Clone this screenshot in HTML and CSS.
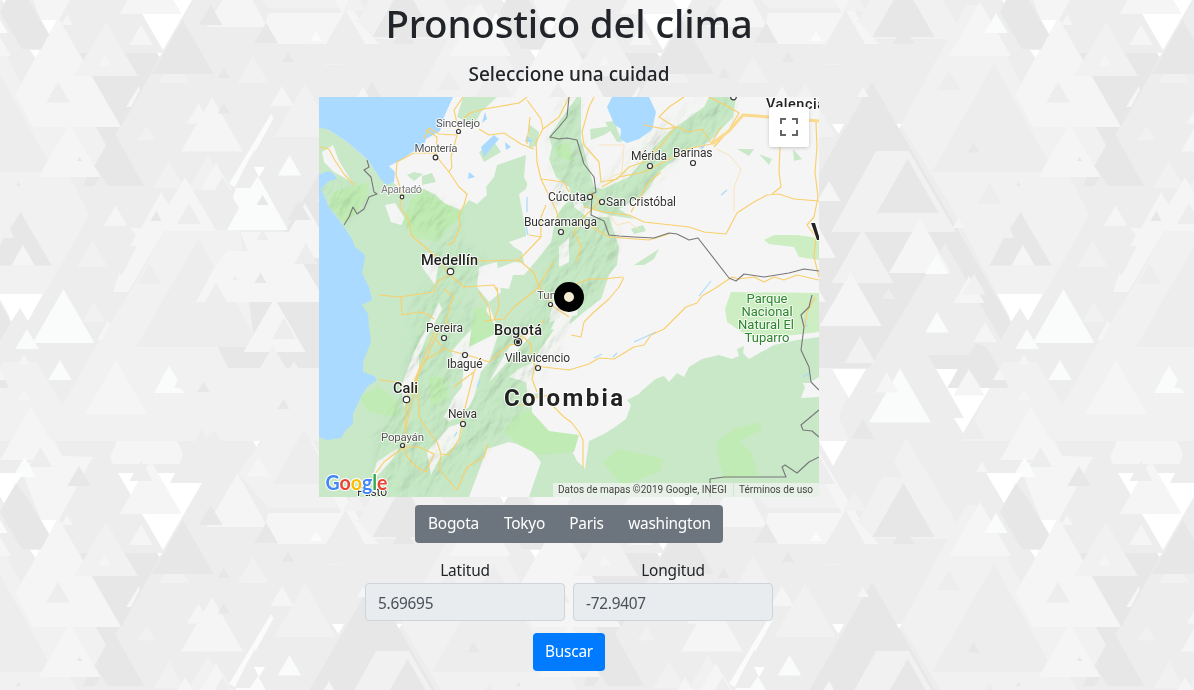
FILE: index.html
```html
<!DOCTYPE html>
<html lang="es">
<head>
<meta charset="utf-8">
<title>Pronostico del clima</title>
<link rel="stylesheet" href="styles.css">
</head>
<body>
<svg class="backdrop" width="100%" height="100%" aria-hidden="true">
  <defs>
    <g id="planes">
      <path class="b" d="M466,5L401,125 454,212 497,294H545L589,215 577,190 540,120 480,5z"/>
      <path class="d" d="M372,82L511,322 501,340 447,247 370,368H229L218,348 240,308 320,172z"/>
      <path class="a" d="M445,243L339,418H500L487,316z"/>
      <path class="b" d="M165,230H240L253,333 218,347 227,368H330L350,390 339,418 350,441H-39L-26,420 3,362H37L62,405 97,345 140,275z"/>
      <path class="a" d="M198.500,239l62.500,108h-125z"/>
      <path class="b" d="M406,438L463,533 451,539H359L356,525 382,477H402L394,461z"/>
      <path class="b" d="M257,447L262,441H312L344,508H268L238,473z"/>
      <path class="d" d="M80,53H158L160,57 121,127 85,65zM96,127H120L115,134 144,186H108L84,150zM83,186H94L100,177H87z"/>
      <path class="b" d="M35,127H96L106,145 95,165H50z"/>
      <path class="c" d="M558.500,18l62.500,109h-125z"/>
      <path class="b" d="M492,64L553,172H558L496,60z"/>
      <path class="a" d="M494,64l60,108h-122z"/>
    </g>
    <g id="facets">
      <path class="w" d="M118,473H175L170,483H202L163,550zM41,520H57L49,534.500zM30,550H40L35.500,558zM486,473H523L504,503zM157,53H162L159.500,57zM254,167H265L259,177zM-3,294H43L28,321 20,308 11,322 8,314zM253,441H260L256.500,447zM319,441H347L333,466zM332,124H344L338.500,134zM396.500,124H402L399,128.500zM332,369H366L349,398zM436,369H458L447,388zM447,388H490L463,433 454,418H464z"/>
      <path class="c" d="M117,441H177L183,453 180,464H113L110,457zM20,467L45,455 93,457 59,520H41zM42,441H54L62,456H46zM268,513H350L379,544H278L266,522z"/>
      <path class="c" d="M150.500,460l31,54h-62zM237.500,473l30,54h-61zM480,502l31,54h-62zM31,406l31,54h-62zM312,441L360,520H346L308,455z"/>
      <path class="a" d="M345.500,510l31,54h-62zM141,461l11.700,20h-23.400zM40.500,447l11.700,20h-23.400zM304,430l31,54h-62zM196,441l5,-12 5,9 9,-7 6,10z"/>
      <path class="e" d="M496,513l11.700,20h-23.400zM24.500,457l11.700,20h-23.400zM316,531l6,10h-12z"/>
      <path class="d" d="M516,483L500,512 522,549H541L549,534 526,496z"/>
      <path class="d" d="M210.700,505l11.700,20h-23.400zM266,523l11.700,20h-23.400zM79,466l11.700,20h-23.400zM403.500,483l31,54h-62zM403.500,526l11,18h-22zM182.700,520l31,54h-62z"/>
      <path class="a" d="M183.700,50l12,21h-24z"/>
      <path class="b" d="M174,56l15.500,27h-31zM253,56l15.500,27h-31zM305,83l31,54h-62zM146.500,125.500l9,15h-18zM106,22l32,54h-64zM332.700,50l9,15h-18zM169,161l15.500,27h-31zM208,155l20,35h-40zM92.500,240l15.500,27h-31zM94,302l11.700,20h-23.400z"/>
      <path class="c" d="M104.700,55l6,10.500h-12zM141,24.500l11.700,20.500h-23.400zM67,15l6,10h-12zM282,86l11.700,20h-23.400zM212,97l31,54.500h-62zM198.500,103.500l11.700,20h-23.400zM69.500,123l31,54h-62zM139,86L140,90 131,107H126zM216,163l15.500,27h-31zM363,87l6,10h-12z"/>
      <path class="a" d="M58,82l11.700,20.500h-23.400zM222.500,177l11.700,20h-23.400zM449,71l11.700,19h-23.400zM489.500,183l11.700,20.500h-23.400z"/>
      <path class="d" d="M288,52l6,10h-12zM223.700,68l6,10h-12zM223.700,103.500l6,10h-12zM473.500,142l6,10.500h-12zM79.500,157l2.500,4h-5zM18.500,182l2.500,4h-5z"/>
      <path class="e" d="M271,114L273.500,118.500 255,152V149L246,165 235,187 229,184zM289.500,155l11.700,20.500h-23.400zM258,176l30,54h-61L239,208 233,198 236,188H250z"/>
      <path class="d" d="M262.500,195l6,10h-12z"/>
      <path class="c" d="M185,177l31.500,54h-63zM161,192L175,215 165,230 128,292H113L119,273 122,275 137,246H130L136,235 130,228H141zM115.500,205.500l11.700,20.500h-23.400zM108,320L110,325 102,340H97z"/>
      <path class="a" d="M189,203l11.700,21h-23.400zM149.500,264l11.700,20h-23.400z"/>
      <path class="d" d="M156.500,210.500l5,10.500h-11z"/>
      <path class="c" d="M305,203l31,55h-62zM227,251H290L304,265 326,302H227L216,283 205,302H196L213,270zM240,232H290V251H248z"/>
      <path class="a" d="M306,243l11.700,21h-23.400zM262.500,230l6,10h-12zM235,275l2.500,5h-5z"/>
      <path class="d" d="M260.500,272.500l6,10.500h-12zM299,200l11.700,20h-23.400z"/>
      <path class="b" d="M376,151H409L456,232H331zM362.500,229l31,54h-62z"/>
      <path class="d" d="M407.700,159l31,54h-62zM20.500,212l31,53.500h-62L4,238H14L10,229z"/>
      <path class="c" d="M23,245l11.700,20.500h-23.400zM329,181l11.700,20h-23.400zM420,218l31,55h-62zM350.700,272l31,54h-62zM274.500,298l31,54h-62zM469,276l15.500,27h-31zM458.500,218l6,10h-12zM485,322l11.700,20h-23.400z"/>
      <path class="b" d="M474,274l11.700,20.500h-23.400zM273,346l13,22h-26zM294,361l4.500,7h-9zM360,336l15.500,27h-31z"/>
      <path class="a" d="M388.500,288l6.500,11h-13zM284,318l11.700,21h-23.400z"/>
      <path class="e" d="M436.700,254l11.700,20h-23.400zM437,312l11.700,20.500h-23.400zM27,329l11.700,20h-23.400zM63.500,289l31,54h-62zM60,360l11.700,20h-23.400zM169,365.500L178,380 174,388H180L185,393H154zM400,368.500l31,54h-62z"/>
      <path class="c" d="M116,359.500l31,54.500h-62zM24,354.500l6,10h-12zM24,390l6,10h-12zM258.500,456.500l11.700,20h-23.400zM386.700,372l11.700,20.500h-23.400z"/>
      <path class="d" d="M203.500,381.500l6,10.500h-12zM283.500,399l6,10h-12zM363,419l11.700,20h-23.400zM427,355H468L476,343 487,348 509,388H482L469,369 458,388H448L458,369H436z"/>
      <path class="c" d="M469,369l15.500,26.500h-31zM499,369l6,11h-12zM482,461.500l6,10.500h-12z"/>
      <path class="b" d="M354.500,491l11.700,20h-23.400z"/>
      <path class="a" d="M474,420l11.700,19h-23.400z"/>
    </g>
    <pattern id="tile" width="500" height="500" patternUnits="userSpaceOnUse">
      <rect width="500" height="500" class="a"/>
      <use href="#planes"/><use href="#planes" x="-500"/><use href="#planes" x="500"/><use href="#planes" y="-500"/>
      <use href="#facets"/><use href="#facets" x="-500"/><use href="#facets" x="500"/><use href="#facets" y="-500"/><use href="#facets" x="-500" y="-500"/>
    </pattern>
  </defs>
  <rect width="100%" height="100%" fill="url(#tile)"/>
</svg>

<main class="page">
  <h1 class="title">Pronostico del clima</h1>
  <h5 class="subtitle">Seleccione una cuidad</h5>

  <div class="map">
    <svg class="map-canvas" width="500" height="400" viewBox="0 0 500 400">
      <defs>
        <filter id="relief" x="0" y="0" width="100%" height="100%">
          <feTurbulence type="fractalNoise" baseFrequency="0.07 0.035" numOctaves="4" seed="11" result="n"/>
          <feDiffuseLighting in="n" surfaceScale="4" diffuseConstant="1.2" lighting-color="#eefbe9"><feDistantLight azimuth="200" elevation="56"/></feDiffuseLighting>
        </filter>
        <filter id="soften"><feGaussianBlur stdDeviation="4"/></filter>
        <mask id="range"><path filter="url(#soften)" fill="#fff" d="M243,0H262V42L270,55 275,90 300,118 300,155 290,185 280,205 255,215 230,270 190,330 160,365 110,400H55L60,350 55,335 85,290 90,240 95,205 115,180 110,155 125,140 80,125 95,95 117,98 142,115 140,145 165,160 150,200 155,230 130,300 150,310 180,240 215,215 225,160 235,140 232,60 228,40zM285,85L325,35 370,10 395,0H417L415,22 380,52 350,72 325,105 290,118 275,100zM0,85L30,85 50,95 38,118 28,128 5,100z"/></mask>
      </defs>
      <rect width="500" height="400" class="plain"/>
      <path class="forest" d="M0,28L10,33 27,44 40,55 49,63 60,80 75,86 82,95 90,91 105,92 117,98 125,106 142,113 150,103 158,107 168,98 167,90 175,80 178,68 207,58 205,80 210,90 200,97 205,125 210,150 225,150 235,140 255,155 245,200 230,220 190,250 150,320 190,350 170,375 150,400H0z"/>
      <path class="forest" d="M258,0L240,25 230,40 233,50 230,62 237,80 250,90 255,110 268,120 290,120 300,150 298,168 290,178 282,202 265,215 250,228 240,240 225,260 200,272 190,280 207,285 213,330 190,330 150,385 130,400H90L120,360 145,310 175,280 215,235 233,200 235,165 228,140 238,115 262,92V0z"/>
      <path class="forest" d="M262,42L275,90 283,92 310,80 325,62 335,50 350,35 385,10 390,0H417L414,20 390,45 365,55 340,75 325,98 300,112 315,122 290,118 265,110 255,80z"/>
      <path class="forest" d="M500,240L478,243 455,248 430,262 424,256 425,249 418,252 420,259 413,262 400,258 383,262 370,270 365,280 358,276 350,285 345,279 330,284 320,297 308,303 312,308 307,322 296,330 285,337 270,344 266,372 258,364 250,348 235,342 208,327 213,297 230,295 240,290 225,325 180,335 140,400H500z"/>
      <path class="plain" d="M205,98L208,88 222,62 228,62 232,85 250,100 237,120 232,145 222,158 205,178 194,178 190,192 177,190 170,175 182,170 195,165 205,166 203,155 195,150 190,145 207,139 213,125z"/>
      <path class="plain" d="M66,108L76,106 86,122 82,128 72,125zM80,64L95,78 82,92zM3,55L14,48 20,64 33,85 15,75 5,65zM240,150L250,140 250,165 240,170zM95,255L108,230 120,205 123,212 108,240 100,258 100,275 85,310 82,290zM213,265L240,225 262,228 300,240 345,275 320,296 306,302 308,318 285,326 270,335 230,330 213,325 213,305 222,295zM145,265L165,230 180,235 170,265 162,275 155,300 150,310 130,325 125,320 135,300 143,290zM240,215L255,215 246,235 232,232zM170,208L180,235 165,240 145,270 134,270 133,254 145,240 160,225zM120,165L108,155 103,170 116,188zM235,200L260,205 258,218 230,225z"/>
      <path class="plain" d="M58,365L80,350 75,360 62,375 52,385zM160,170L178,165 182,195 170,205 158,190zM130,330L145,325 140,345 120,362 112,378 108,355z"/>
      <path class="plain" d="M168,352L190,345 210,350 222,365 210,400H150zM484,286L490,286 500,280V300L482,301 486,290z"/>
      <path class="forest" d="M144,0H178L162,15 155,28 138,20zM160,55L175,45 182,55 165,65zM95,75L104,77 95,84 88,78zM103,79L113,76 117,85 103,88zM271,32L300,28 285,38 272,43zM286,25L295,24 303,45 298,45zM315,168L340,152 335,162 325,168zM210,27L220,35 218,48 210,52zM312,132L324,128 327,134 315,137zM418,52L435,52 430,59zM440,57L453,62 450,68zM474,52L483,62 475,64z"/>
      <path class="park" d="M445,143L455,138H478L500,141V163L480,160 475,150 450,147zM406,212L412,195 500,196V235L475,238 430,240 408,225z"/>
      <path class="meadow" d="M92,103L105,92 125,106 145,116 130,130 118,145 95,140 84,125zM14,95L50,85 48,100 35,118 25,125 10,110zM40,300L60,290 80,305 78,320 50,315zM185,335L195,320 210,312 230,334 260,338 255,355 220,358 200,348zM284,365L300,352 345,362 340,375 315,384 305,392zM398,345L415,332 440,325 443,332 420,345 432,355 440,378 405,382 400,365zM155,212L165,210 180,235 150,250zM235,50L250,45 255,65 240,60zM110,280L125,280 130,300 112,310z"/>
      <g class="shade" mask="url(#range)"><rect x="-400" y="-400" width="1200" height="1200" transform="rotate(30)" filter="url(#relief)"/></g>
      <path class="water" d="M0,0H134L128,13 125,20 121,34 107,42 104,50 95,54 82,63 70,69 76,75 75,85 67,88 60,80 49,63 40,55 27,44 10,33 0,30zM0,78L8,74 14,76 18,82 10,84 2,92 10,110 25,130 33,142 36,150 45,157 46,160 43,176 50,190 53,203 43,208 49,217 50,230 52,245 44,265 44,275 55,279 58,283 48,290 42,300 34,317 34,327 28,332 22,341 8,343 0,340zM293,0H330L337,15 333,33 320,42 308,46 301,42 302,32 295,27 288,10zM162,50L175,38 180,42 165,60zM150,75L156,80 149,82zM166,15L168,22 163,26zM208,38L214,45 206,45zM186,45L192,50 187,53zM381,50L387,46 383,53z"/>
      <path class="stream" d="M208,100V115M206,125L209,138M402,98L408,93M380,199L392,184M315,245L337,235M275,261L283,257M294,260L298,256M158,290L161,283M135,340L138,335M103,262L111,247M484,280L490,276M485,222L488,230"/>
      <g class="road">
        <path d="M144,0L135,13 137,22 140,28 137,42 132,60 133,70 130,75M144,22L151,16 165,12 200,6 208,0M208,3L222,22 224,32 217,45 218,65 222,82 232,103 237,113 242,130M224,32L240,20 250,0M160,32L170,38 185,36 202,47 215,52M208,47L211,20M78,65L95,56 115,56 118,60 130,75 140,90 148,97 145,108 140,117 141,130 135,145 128,148M78,65L77,78 82,93 81,110 90,123 92,138 100,145 120,162 130,178M105,42L110,31 120,37 137,38M117,60L118,40 107,33M0,50L10,52 15,62 25,77 35,88"/>
        <path d="M131,178L145,190 175,188 178,194M135,160L165,164 200,163 222,140 222,120 227,108M200,163L215,176 220,190M130,178L118,185 115,195 80,200 60,198M125,192L135,200 130,210 128,225 133,235M222,140L210,138M235,165L230,172 220,188 228,200 235,210 250,220M250,95L245,85 222,82M220,190L195,210 185,222 172,223 170,210 160,195M178,190L180,210 175,223 165,224M83,218L82,200M83,218L100,215 108,217 115,222M115,235L95,285 88,300 85,350M120,232L108,260 98,280 85,340M115,240L125,252 140,256 155,260 170,265 182,255 190,248 199,247M125,252L108,262M98,280L100,320 110,335 118,345 122,357 130,358 140,342 143,328 145,315 155,275 162,260M85,350L100,350 115,357 107,375 98,370 88,360zM85,350L65,365 50,385M122,357L120,372 138,393 148,370 165,360 169,347M60,283L78,285 83,290M135,290L148,280 155,275M199,247L205,240 212,248 213,262 216,269M199,240L215,235 225,223M216,269L213,282 218,295M216,269L250,273 270,267 280,261 295,262 315,250 325,248 332,238 345,232 355,222 367,210 378,206 383,199 395,192 413,180 420,182 435,180 445,185 455,180 465,183 478,178 500,183"/>
        <path d="M232,298L218,300 210,307 200,308M230,305L245,320 252,325 260,335 264,343 264,371M305,180L300,190 290,202 275,215 265,225 262,240 252,238M255,188L270,182 285,182 303,180M275,0L270,10 263,35 265,48 280,65 282,85 298,82 310,70 325,65 345,45 356,30 340,20 350,10 365,0M390,0L410,10 420,16 410,33 395,50M283,90L300,80 325,75 345,65 368,52 392,47 402,30M265,110L285,115 310,118 325,125 370,130 385,135 407,137 418,116 435,105 448,98 460,97 475,102 500,104M461,50L460,75 462,90 453,97M497,25L498,50 496,75 499,100 495,120 488,128 497,140 495,160 500,180M342,75L330,85 318,105 312,115M325,28L345,32 358,30 370,35 383,32 393,47M257,165L262,150 255,135 265,120 280,105 272,95M265,125L290,140 330,143 350,137M496,200L488,215 486,230"/>
      </g>
      <path class="highway" d="M393,47L410,34 424,18 450,20 500,24"/>
      <path class="track" d="M280,48L305,48 303,75 288,82M397,52L410,58 422,72 415,90 415,115M290,118L298,128 310,125 320,133"/>
      <g class="border">
        <path d="M48,63L50,70 45,73 52,80 55,95 58,97 50,100 45,112 38,117 34,110 30,120 25,128M250,0L248,20 240,30 231,40 240,42 248,41 258,43 265,67 275,80 277,95 273,97 272,118 285,124 290,138 300,139 315,140 335,141 350,136 358,137 370,143 379,141 410,181 417,184 425,177 445,180 470,176 485,172 500,174"/>
        <path d="M493,198L490,210 482,218 485,230 482,253 490,270 492,285 500,293M500,313L482,328 484,333 493,334 500,340M391,400V382L405,380H467L463,370 466,368 478,376 490,365 500,360"/>
      </g>
      <g class="stops">
        <circle cx="139.500" cy="34.500" r="2"/><circle cx="116.500" cy="60.500" r="2.300"/><circle cx="83" cy="100" r="1.800"/><circle cx="271" cy="100" r="2.500"/><circle cx="283" cy="105" r="2.500"/><circle cx="331" cy="69" r="2.500"/><circle cx="374" cy="66" r="2.500"/><circle cx="242" cy="135" r="2.500"/><circle cx="131.500" cy="174.500" r="3.200"/><circle cx="231.500" cy="207.500" r="2"/><circle cx="125" cy="241" r="2.500"/><circle cx="146" cy="258" r="2.500"/><circle cx="219" cy="271" r="2.500"/><circle cx="87.500" cy="302.500" r="3.200"/><circle cx="144" cy="327" r="2.500"/><circle cx="83.500" cy="348.500" r="2"/><circle cx="414.500" cy="0" r="2.800"/><circle cx="199" cy="245" r="3.600"/><circle cx="199" cy="245" r="1.600" class="core"/>
      </g>
      <g class="town">
        <text class="soft" x="117" y="30" textLength="44">Sincelejo</text>
        <text class="soft" x="95.500" y="55" textLength="43">Montería</text>
        <text class="faint" x="62" y="96" textLength="41">Apartadó</text>
        <text x="229" y="104" textLength="38">Cúcuta</text>
        <text x="287" y="109" textLength="70">San Cristóbal</text>
        <text x="312" y="63" textLength="36">Mérida</text>
        <text x="354" y="60" textLength="39.500">Barinas</text>
        <text x="205" y="129" textLength="73">Bucaramanga</text>
        <text class="soft" x="218" y="202">Tunja</text>
        <text x="107" y="235" textLength="37">Pereira</text>
        <text x="128" y="271" textLength="35.500">Ibagué</text>
        <text x="186" y="265" textLength="65">Villavicencio</text>
        <text x="129" y="321" textLength="29">Neiva</text>
        <text class="soft" x="62" y="344" textLength="43">Popayán</text>
        <text x="38" y="399" textLength="30">Pasto</text>
      </g>
      <g class="city">
        <text x="102" y="168" textLength="57">Medellín</text>
        <text x="175" y="238" textLength="48">Bogotá</text>
        <text x="74" y="296" textLength="25">Cali</text>
        <text x="447" y="12" textLength="59">Valencia</text>
      </g>
      <g class="nation">
        <text x="185" y="309" textLength="119">Colombia</text>
        <text x="492" y="143">V</text>
      </g>
      <g class="reserve">
        <text x="448" y="206">Parque</text><text x="448" y="219">Nacional</text><text x="447" y="232">Natural El</text><text x="448" y="245">Tuparro</text>
      </g>
      <circle class="pin" cx="250" cy="200" r="10"/>
      <text class="logo" x="6.500" y="393" textLength="62" lengthAdjust="spacingAndGlyphs"><tspan fill="#4285f4">G</tspan><tspan fill="#ea4335">o</tspan><tspan fill="#fbbc05">o</tspan><tspan fill="#4285f4">g</tspan><tspan fill="#34a853">l</tspan><tspan fill="#ea4335">e</tspan></text>
    </svg>
    <button class="fullscreen" aria-label="Pantalla completa">
      <svg width="18" height="18" viewBox="0 0 18 18"><path d="M0,0H6V2H2V6H0zM12,0H18V6H16V2H12zM0,12H2V16H6V18H0zM16,12H18V18H12V16H16z" fill="#666"/></svg>
    </button>
    <div class="credits"><span class="credit data">Datos de mapas ©2019 Google, INEGI</span><span class="credit terms">Términos de uso</span></div>
  </div>

  <div class="cities">
    <button class="city-btn bogota">Bogota</button><button class="city-btn tokyo">Tokyo</button><button class="city-btn paris">Paris</button><button class="city-btn washington">washington</button>
  </div>

  <form class="coords">
    <label class="field"><span class="field-name">Latitud</span><input class="field-value" value="5.69695" readonly></label>
    <label class="field"><span class="field-name">Longitud</span><input class="field-value" value="-72.9407" readonly></label>
  </form>
  <button class="search">Buscar</button>
</main>
</body>
</html>
```
FILE: styles.css
```css
* { box-sizing: border-box; }
body {
  margin: 0;
  height: 690px;
  overflow: hidden;
  background: #ededed;
  color: #212529;
  font: 400 15.4px/24px "Segoe UI", "Noto Sans", "Open Sans", sans-serif;
}
button, input { font: inherit; }

.backdrop { position: absolute; inset: 0; z-index: -1; }
.a { fill: #ededed; }
.b { fill: #f1f1f1; }
.c { fill: #f5f5f5; }
.d { fill: #e7e7e7; }
.e { fill: #fafcfb; }
.w { fill: #fff; }

.page {
  width: 1138px;
  display: flex;
  flex-direction: column;
  align-items: center;
}
.title { margin: 0 0 14px; height: 49px; font-size: 38.5px; line-height: 46px; font-weight: 500; letter-spacing: -0.2px; }
.subtitle { margin: 0 0 10px; height: 24px; font-size: 19px; line-height: 22px; font-weight: 500; }

.map { position: relative; width: 500px; height: 400px; overflow: hidden; }
.map-canvas { display: block; font-family: Roboto, sans-serif; }
.plain { fill: #f5f5f5; }
.water { fill: #aadaff; }
.forest { fill: #c8e8c8; }
.meadow { fill: #c1ebb5; }
.park { fill: #cdedc3; }
.shade { opacity: .32; mix-blend-mode: multiply; }
.stream { fill: none; stroke: #aadaff; stroke-width: 1.2; }
.road { fill: none; stroke: #f9cf6b; stroke-width: 1.15; stroke-linejoin: round; }
.highway { fill: none; stroke: #fbd98d; stroke-width: 3; }
.track { fill: none; stroke: #fae3bd; stroke-width: 1; }
.border { fill: none; stroke: #777; stroke-width: 1.1; stroke-linejoin: round; }
.stops { fill: #fff; stroke: #333; stroke-width: 1.2; }
.stops .core { fill: #222; }
.town, .city, .nation, .reserve { paint-order: stroke; stroke: #fff; stroke-opacity: .8; stroke-width: 2px; stroke-linejoin: round; fill: #303030; }
.town { font-size: 12px; }
.town .soft { font-size: 11.5px; fill: #555; }
.town .faint { font-size: 11px; fill: #777; }
.city { font-size: 14.5px; font-weight: 500; fill: #222; }
.nation { font-size: 24px; font-weight: 700; fill: #222; }
.reserve { font-size: 13px; text-anchor: middle; fill: #2c842c; }
.pin { fill: #f3ead2; stroke: #000; stroke-width: 10; }
.logo { font: 700 20px Lato, sans-serif; paint-order: stroke; stroke: #fff; stroke-width: 2px; }

.fullscreen {
  position: absolute;
  top: 10px;
  right: 10px;
  width: 40px;
  height: 40px;
  padding: 0;
  display: grid;
  place-items: center;
  border: 0;
  border-radius: 2px;
  background: #fff;
  box-shadow: 0 1px 4px -1px rgba(0, 0, 0, .3);
}
.credits {
  position: absolute;
  right: 0;
  bottom: 0;
  display: flex;
  height: 14px;
  font: 10px/14px Roboto, sans-serif;
  color: #444;
  white-space: nowrap;
}
.credit { background: rgba(245, 245, 245, .7); }
.data { width: 180px; padding-left: 5px; }
.terms { width: 86px; padding-left: 5px; border-left: 1px solid #d5e3d5; }

.cities { display: flex; margin-top: 8px; border-radius: 4px; overflow: hidden; }
.city-btn { height: 38px; padding: 0; border: 0; background: #6c757d; color: #fff; letter-spacing: -.25px; }
.bogota { width: 77px; }
.tokyo { width: 65px; }
.paris { width: 59px; }
.washington { width: 107px; }

.coords { display: flex; gap: 8px; margin-top: 16px; }
.field { display: flex; flex-direction: column; width: 200px; text-align: center; letter-spacing: -.15px; }
.field-name { height: 24px; }
.field-value {
  width: 200px;
  height: 38px;
  padding: 7px 12px 5px;
  border: 1px solid #ced4da;
  border-radius: 4px;
  background: #e9ecef;
  color: #495057;
  letter-spacing: -.25px;
}
.search {
  width: 72px;
  height: 38px;
  margin-top: 12px;
  padding: 0;
  border: 0;
  border-radius: 4px;
  background: #007bff;
  color: #fff;
  letter-spacing: -.25px;
}
```
